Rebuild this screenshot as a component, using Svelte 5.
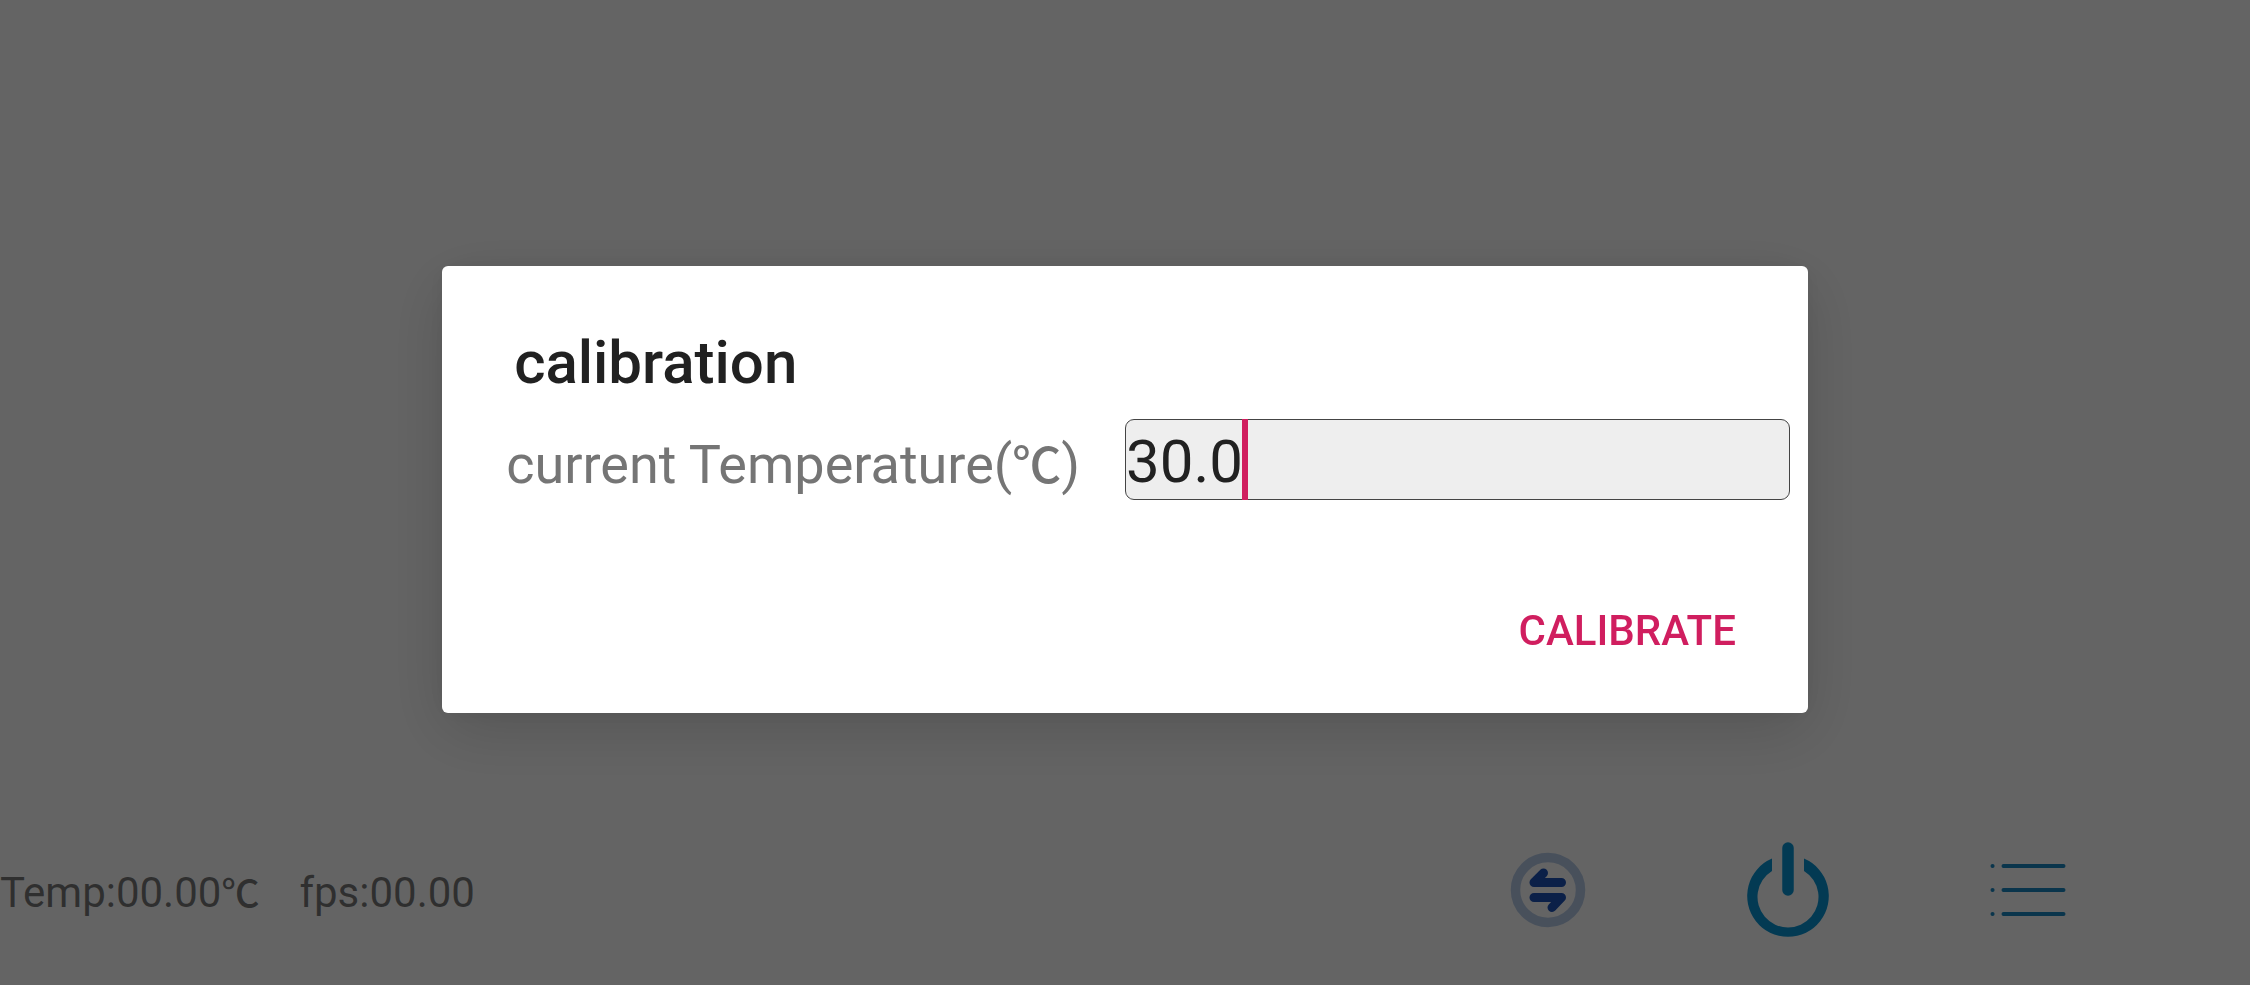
<script>
  let temperature = $state('30.0');
</script>

<div class="screen">
  <footer class="bar">
    <div class="readings">
      <span>Temp:00.00<span class="unit">℃</span></span>
      <span>fps:00.00</span>
    </div>
    <nav class="actions">
      <button class="icon" type="button" aria-label="Switch">
        <svg viewBox="0 0 120 120" width="120" height="120" fill="none" stroke-linecap="round" stroke-linejoin="round">
          <circle cx="58" cy="60" r="32.5" stroke="#b4c8e4" stroke-width="9.500" />
          <g stroke="#1c52b4" stroke-width="9">
            <path d="M71.500 52.500H44L53.500 43" />
            <path d="M44 67.500H71.500L62 77.500" />
          </g>
        </svg>
      </button>
      <button class="icon" type="button" aria-label="Power">
        <svg viewBox="0 0 120 120" width="120" height="120" fill="none" stroke="#0892d0">
          <path d="M58 18V60" stroke-width="11.500" stroke-linecap="round" />
          <path fill="#0892d0" stroke="none" d="M42 28.500V41A30.500 30.500 0 1 0 74 41V28.500A40.800 40.800 0 1 1 42 28.500Z" />
        </svg>
      </button>
      <button class="icon" type="button" aria-label="Menu">
        <svg viewBox="0 0 120 120" width="120" height="120" fill="none" stroke="#1a86bd" stroke-width="4" stroke-linecap="round">
          <path d="M33.500 36H93.500M33.500 60H93.500M33.500 84H93.500M22.500 36H22.600M22.500 60H22.600M22.500 84H22.600" />
        </svg>
      </button>
    </nav>
  </footer>

  <div class="scrim">
    <form class="dialog" onsubmit={(e) => e.preventDefault()}>
      <h1>calibration</h1>
      <div class="row">
        <label for="temperature">current Temperature(<span class="unit">℃</span>)</label>
        <div class="field">
          <input id="temperature" type="text" inputmode="decimal" bind:value={temperature} />
          <div class="caret-line" aria-hidden="true">
            <span class="ghost">{temperature}</span><i></i>
          </div>
        </div>
      </div>
      <div class="buttons">
        <button class="confirm" type="submit">CALIBRATE</button>
      </div>
    </form>
  </div>
</div>

<style>
  .screen {
    min-height: 100vh;
    display: flex;
    flex-direction: column;
    justify-content: flex-end;
    background: #fafafa;
    font-family: Roboto, 'Noto Sans CJK SC', sans-serif;
  }

  .bar {
    display: flex;
    justify-content: space-between;
    align-items: center;
    padding: 0 160px 35px 0;
  }

  .readings {
    display: flex;
    gap: 40px;
    padding-top: 6px;
    font-size: 42px;
    line-height: 50px;
    color: rgba(0, 0, 0, 0.54);
  }

  .unit {
    font-weight: 500;
  }

  .readings .unit {
    font-size: 38px;
    line-height: 1;
  }

  .actions {
    display: flex;
    gap: 120px;
  }

  button {
    border: 0;
    padding: 0;
    background: none;
    font-family: inherit;
    cursor: pointer;
  }

  .icon svg {
    display: block;
  }

  .scrim {
    position: fixed;
    inset: 0;
    display: flex;
    justify-content: center;
    align-items: center;
    padding-bottom: 6px;
    background: rgba(0, 0, 0, 0.6);
  }

  .dialog {
    box-sizing: border-box;
    width: 60.7%;
    padding: 62px 18px 46px 64px;
    border-radius: 6px;
    background: #fff;
    box-shadow: 0 18px 64px rgba(0, 0, 0, 0.15), 0 0 24px rgba(0, 0, 0, 0.06);
  }

  h1 {
    margin: 0;
    padding: 0 8px 21px;
    font-size: 60px;
    line-height: 70px;
    font-weight: 500;
    color: #212121;
  }

  .row {
    display: flex;
    align-items: center;
    gap: 45px;
  }

  label {
    padding-top: 10px;
    font-size: 54px;
    line-height: 64px;
    color: #757575;
    white-space: nowrap;
  }

  label .unit {
    font-size: 49px;
    line-height: 1;
  }

  .field {
    position: relative;
    flex: 1;
    min-width: 0;
  }

  input,
  .caret-line {
    font-family: inherit;
    font-size: 60px;
    line-height: 75px;
  }

  input {
    display: block;
    box-sizing: border-box;
    width: 100%;
    height: 81px;
    padding: 4px 0 0;
    border: 1px solid #444;
    border-radius: 9px;
    outline: 0;
    background: #eee;
    color: #212121;
    caret-color: transparent;
  }

  .caret-line {
    position: absolute;
    inset: 0;
    display: flex;
    overflow: hidden;
    pointer-events: none;
  }

  .ghost {
    visibility: hidden;
  }

  .caret-line i {
    width: 6px;
    background: #d01e5f;
  }

  .buttons {
    display: flex;
    justify-content: flex-end;
    padding: 95px 54px 0 0;
  }

  .confirm {
    font-size: 42px;
    line-height: 72px;
    font-weight: 500;
    color: #d01e5f;
  }
</style>
